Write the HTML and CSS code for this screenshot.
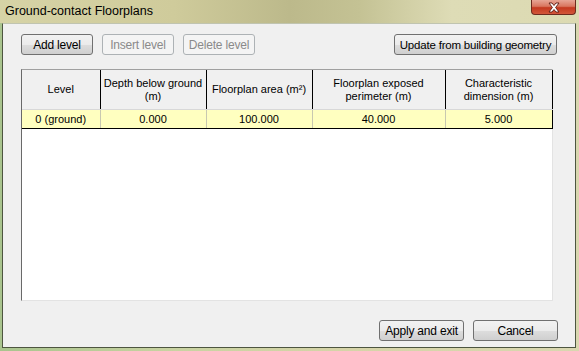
FILE: index.html
```html
<!DOCTYPE html>
<html lang="en">

<head>
    <meta charset="UTF-8">
    <title>Ground-contact Floorplans</title>
    <link rel="stylesheet" href="styles.css">
</head>

<body>
    <div class="window">
        <div class="titlebar">
            <span class="title">Ground-contact Floorplans</span>
            <div class="close-btn">
                <svg width="14" height="11" viewBox="0 0 14 11">
                    <path d="M2 1 L5 1 L7 3.5 L9 1 L12 1 L8.6 5.5 L12 10 L9 10 L7 7.5 L5 10 L2 10 L5.4 5.5 Z"
                        fill="#fff" stroke="#5a1a10" stroke-width="0.9" stroke-linejoin="round" />
                </svg>
            </div>
        </div>
        <div class="client">
            <div class="toolbar">
                <div class="button-group">
                    <button class="btn btn-add">Add level</button>
                    <button class="btn btn-small" disabled>Insert level</button>
                    <button class="btn btn-small" disabled>Delete level</button>
                </div>
                <button class="btn btn-update">Update from building geometry</button>
            </div>
            <div class="grid">
                <table class="levels">
                    <colgroup>
                        <col class="col-level">
                        <col class="col-depth">
                        <col class="col-area">
                        <col class="col-perim">
                        <col class="col-dim">
                    </colgroup>
                    <thead>
                        <tr>
                            <th>Level</th>
                            <th>Depth below ground<br>(m)</th>
                            <th>Floorplan area (m&sup2;)</th>
                            <th>Floorplan exposed<br>perimeter (m)</th>
                            <th>Characteristic<br>dimension (m)</th>
                        </tr>
                    </thead>
                    <tbody>
                        <tr>
                            <td>0 (ground)</td>
                            <td>0.000</td>
                            <td>100.000</td>
                            <td>40.000</td>
                            <td>5.000</td>
                        </tr>
                    </tbody>
                </table>
            </div>
            <div class="footer">
                <button class="btn btn-apply">Apply and exit</button>
                <button class="btn btn-cancel">Cancel</button>
            </div>
        </div>
    </div>
</body>

</html>
```

FILE: styles.css
```css
body {
    margin: 0;
    padding: 0;
    font-family: "Liberation Sans", Arial, sans-serif;
    font-size: 12px;
    color: #000;
}

.window {
    width: 579px;
    height: 351px;
    box-sizing: border-box;
    padding: 0 3px 3px 2px;
    display: flex;
    flex-direction: column;
    background: linear-gradient(to right, #a9c48e 0%, #c9d3a2 30%, #d6d4a8 60%, #d9d7b0 100%);
}

.titlebar {
    height: 23px;
    margin: 0 -3px 0 -2px;
    display: flex;
    justify-content: space-between;
    align-items: flex-start;
    background: linear-gradient(to right, #d6d3a6 0%, #cfcb9b 30%, #bcb98b 50%, #c4c294 62%, #dedcb6 78%, #dcdab2 100%);
}

.title {
    padding: 4px 0 0 5px;
    font-size: 12.5px;
}

.close-btn {
    width: 45px;
    height: 15px;
    margin-right: 3px;
    box-sizing: border-box;
    border: 1px solid #6d2a1e;
    border-top: none;
    border-radius: 0 0 4px 4px;
    background: linear-gradient(to bottom, #e7a595 0%, #d9765f 45%, #c4391f 55%, #d2563a 100%);
    display: flex;
    justify-content: center;
    align-items: center;
}

.client {
    flex: 1;
    display: flex;
    flex-direction: column;
    background: #f0f0f0;
    border: 1px solid #4d5540;
    border-top: 1px solid #c0c4b0;
    padding: 10px 17px 6px 18px;
}

.toolbar {
    display: flex;
    justify-content: space-between;
    align-items: center;
}

.button-group {
    display: flex;
    gap: 9px;
}

.btn {
    height: 21px;
    padding: 0;
    white-space: nowrap;
    font-family: "Liberation Sans", Arial, sans-serif;
    font-size: 12px;
    letter-spacing: -0.2px;
    color: #000;
    border: 1px solid #707070;
    border-radius: 3px;
    background: linear-gradient(to bottom, #f2f2f2 0%, #ebebeb 50%, #dddddd 51%, #cfcfcf 100%);
}

.btn:disabled {
    color: #8a8a8a;
    border-color: #adb2b5;
    background: #f4f4f4;
}

.btn-add,
.btn-small {
    width: 72px;
}

.btn-update {
    width: 163px;
    margin-right: 1px;
    font-size: 11.5px;
}

.grid {
    margin-top: 14px;
    width: 532px;
    height: 232px;
    box-sizing: border-box;
    background: #fff;
    border-top: 1px solid #a0a0a0;
    border-left: 1px solid #696969;
    border-right: 1px solid #e3e3e3;
    border-bottom: 1px solid #e3e3e3;
}

.levels {
    border-collapse: collapse;
    table-layout: fixed;
    width: 530px;
    font-size: 11px;
}

.col-level {
    width: 78px;
}

.col-depth,
.col-area {
    width: 106px;
}

.col-perim {
    width: 133px;
}

.col-dim {
    width: 107px;
}

.levels th {
    height: 39px;
    padding: 0;
    font-weight: normal;
    line-height: 13px;
    text-align: center;
    vertical-align: middle;
    background: #f0f0f0;
    border-right: 1px solid #000;
    border-bottom: 1px solid #d8d8d8;
}

.levels td {
    height: 18px;
    padding: 0;
    text-align: center;
    background: #ffffc0;
    border-right: 1px solid #c8c8b0;
    border-bottom: 1px solid #000;
}

.levels td:last-child {
    border-right: 1px solid #000;
}

.footer {
    margin-top: auto;
    display: flex;
    justify-content: flex-end;
    gap: 9px;
}

.btn-apply,
.btn-cancel {
    width: 85px;
}
```
